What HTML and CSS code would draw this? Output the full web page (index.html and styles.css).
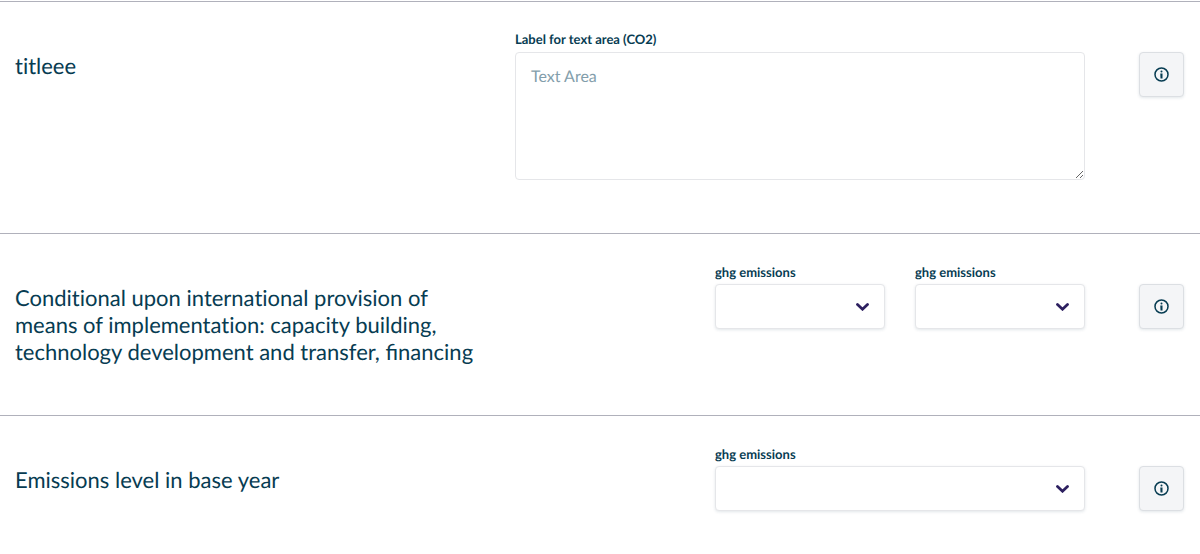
FILE: index.html
```html
<!DOCTYPE html>
<html lang="en">
<head>
<meta charset="utf-8">
<meta name="viewport" content="width=device-width, initial-scale=1">
<title>Emissions form</title>
<link rel="stylesheet" href="styles.css">
</head>
<body>
<svg class="sprite" aria-hidden="true">
  <symbol id="info" viewBox="0 0 16 16">
    <circle cx="7.500" cy="7.500" r="6.500" fill="none" stroke="currentColor" stroke-width="1.500"/>
    <circle cx="7.500" cy="4.500" r="1" fill="currentColor"/>
    <path d="M6.300 6.400h2.200v5H6.500z" fill="currentColor"/>
  </symbol>
  <symbol id="chevron" viewBox="0 0 14 8">
    <path d="M1.500 1.500 6.500 6.200l5-4.700" fill="none" stroke="currentColor" stroke-width="2.800" stroke-linecap="round"/>
  </symbol>
</svg>
<form class="form">
  <section class="row">
    <h2 class="title">titleee</h2>
    <div class="field wide">
      <label class="label" for="notes">Label for text area (CO2)</label>
      <textarea class="control textarea" id="notes" placeholder="Text Area"></textarea>
    </div>
    <div class="action"><button class="info" type="button" aria-label="Information"><svg class="info-icon"><use href="#info"/></svg></button></div>
  </section>
  <section class="row">
    <h2 class="title">Conditional upon international provision of means of implementation: capacity building, technology development and transfer, <span class="ligatures">financing</span></h2>
    <div class="field first">
      <label class="label" for="ghg1">ghg emissions</label>
      <div class="picker"><select class="control select" id="ghg1"><option></option></select><svg class="chevron"><use href="#chevron"/></svg></div>
    </div>
    <div class="field second">
      <label class="label" for="ghg2">ghg emissions</label>
      <div class="picker"><select class="control select" id="ghg2"><option></option></select><svg class="chevron"><use href="#chevron"/></svg></div>
    </div>
    <div class="action"><button class="info" type="button" aria-label="Information"><svg class="info-icon"><use href="#info"/></svg></button></div>
  </section>
  <section class="row">
    <h2 class="title">Emissions level in base year</h2>
    <div class="field both">
      <label class="label" for="ghg3">ghg emissions</label>
      <div class="picker"><select class="control select" id="ghg3"><option></option></select><svg class="chevron"><use href="#chevron"/></svg></div>
    </div>
    <div class="action"><button class="info" type="button" aria-label="Information"><svg class="info-icon"><use href="#info"/></svg></button></div>
  </section>
</form>
</body>
</html>
```
FILE: styles.css
```css
* { box-sizing: border-box; }
body {
  margin: 0;
  background: #fff;
  color: #073c52;
  font-family: Lato, sans-serif;
  text-rendering: geometricPrecision;
}
.sprite { display: none; }
.form { padding-top: 1px; }
.row {
  display: grid;
  grid-template-columns: repeat(12, minmax(0, 1fr));
  align-items: start;
  border-top: 1px solid #b0b1bb;
}
.title {
  grid-column: 1 / 6;
  margin: 0;
  padding: 50px 15px;
  font-size: 22px;
  font-weight: 400;
  font-variant-ligatures: none;
  line-height: 27px;
}
.ligatures { font-variant-ligatures: normal; }
.field {
  display: flex;
  flex-direction: column;
  gap: 4px;
  padding: 30px 15px 0;
}
.wide { grid-column: 6 / 12; gap: 5px; padding-top: 29px; padding-bottom: 53px; }
.first { grid-column: 8 / 10; }
.second { grid-column: 10 / 12; }
.both { grid-column: 8 / 12; }
.label {
  font-size: 13px;
  font-weight: 700;
  line-height: 16px;
}
.control {
  display: block;
  width: 100%;
  border: 1px solid #e5e6e9;
  border-radius: 4px;
  background: #fff;
  color: inherit;
  font: 16px/20px Lato, sans-serif;
}
.textarea {
  height: 128px;
  padding: 14px 15px;
  resize: both;
  text-rendering: inherit;
}
.textarea::placeholder { color: #839eab; opacity: 1; }
.picker { display: grid; align-items: center; }
.select {
  grid-area: 1 / 1;
  height: 45px;
  padding: 0 40px 0 15px;
  appearance: none;
  box-shadow: 0 1px 3px rgba(17, 55, 80, 0.12);
}
.chevron {
  grid-area: 1 / 1;
  justify-self: end;
  width: 14px;
  height: 8px;
  margin-right: 15px;
  color: #2d2060;
  pointer-events: none;
}
.action {
  grid-column: 12;
  display: flex;
  justify-content: flex-end;
  padding: 50px 16px 0 0;
}
.info {
  display: flex;
  align-items: center;
  justify-content: center;
  width: 45px;
  height: 45px;
  padding: 0;
  border: 1px solid #dcdfe3;
  border-radius: 4px;
  background: #f4f5f7;
  color: #073c52;
  box-shadow: 0 1px 3px rgba(17, 55, 80, 0.12);
}
.info-icon { width: 16px; height: 16px; }
```
